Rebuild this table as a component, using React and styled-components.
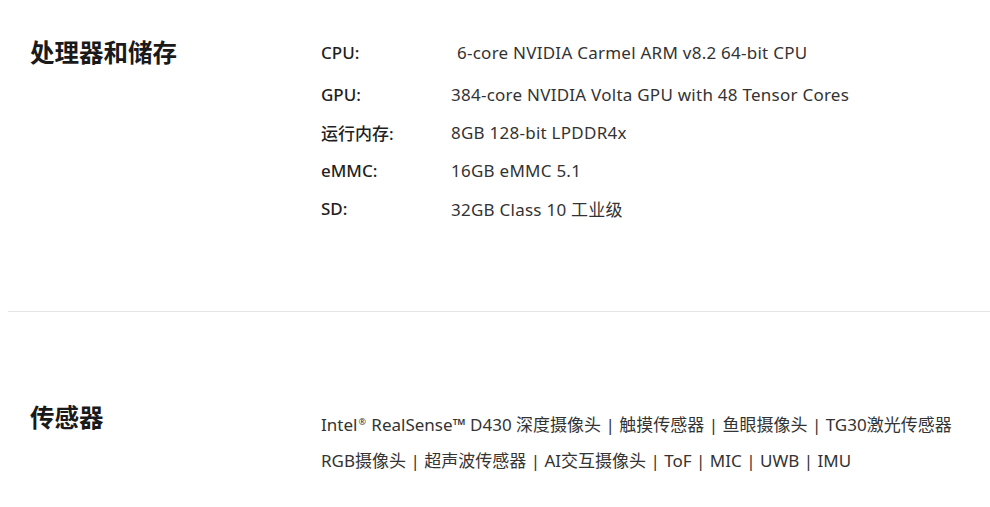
import React from 'react'
import styled, { createGlobalStyle } from 'styled-components'

const GlobalStyle = createGlobalStyle`
    body {
        margin: 0;
        background: #fff;
        font-family: "Noto Sans", "Noto Sans CJK SC", sans-serif;
    }
`
const StyledPage = styled.div`
    width: 990px;
    height: 507px;
    overflow: hidden;
    background: #fff;
`
const StyledSection = styled.section`
    display: grid;
    grid-template-columns: 291px 1fr;
    padding: ${props => props.padding};
    margin-left: 30px;
`
const StyledTitle = styled.h2`
    margin: 0;
    font-size: 24.5px;
    font-weight: 700;
    color: #1a1a1a;
    line-height: ${props => props.lineHeight};
    font-family: "Noto Sans CJK SC", sans-serif;
`
const StyledSpecList = styled.div`
    display: flex;
    flex-direction: column;
`
const StyledSpecRow = styled.div`
    display: grid;
    grid-template-columns: 130px 1fr;
    height: 38px;
    align-items: center;
    font-size: 17px;
    &:first-child {
        height: 43px;
        align-items: start;
        padding-top: 9px;
        box-sizing: border-box;
    }
`
const StyledLabel = styled.div`
    color: #1f1f1f;
    font-weight: 500;
`
const StyledValue = styled.div`
    color: #333;
    letter-spacing: 0.25px;
    padding-left: ${props => props.indent || 0}px;
`
const StyledDivider = styled.hr`
    border: 0;
    border-top: 1px solid #e4e4e4;
    margin: 0 0 0 8px;
`
const StyledSensorText = styled.div`
    font-size: 17px;
    line-height: 36px;
    color: #333;
    padding-top: 2px;
    sup {
        font-size: 9px;
        vertical-align: 6px;
        line-height: 0;
        margin: 0 1px;
    }
`

const specs = [
    { label: 'CPU:', value: '6-core NVIDIA Carmel ARM v8.2 64-bit CPU', indent: 6 },
    { label: 'GPU:', value: '384-core NVIDIA Volta GPU with 48 Tensor Cores' },
    { label: '运行内存:', value: '8GB 128-bit LPDDR4x' },
    { label: 'eMMC:', value: '16GB eMMC 5.1' },
    { label: 'SD:', value: '32GB Class 10 工业级' },
]

const App = () => {
    return (
        <StyledPage>
            <GlobalStyle />
            <StyledSection padding="32px 0 84px">
                <StyledTitle lineHeight="40px">处理器和储存</StyledTitle>
                <StyledSpecList>
                    {specs.map(spec => (
                        <StyledSpecRow key={spec.label}>
                            <StyledLabel>{spec.label}</StyledLabel>
                            <StyledValue indent={spec.indent}>{spec.value}</StyledValue>
                        </StyledSpecRow>
                    ))}
                </StyledSpecList>
            </StyledSection>
            <StyledDivider />
            <StyledSection padding="93px 0 0">
                <StyledTitle lineHeight="24px">传感器</StyledTitle>
                <StyledSensorText>
                    <div>Intel<sup>®</sup> RealSense™ D430 深度摄像头 | 触摸传感器 | 鱼眼摄像头 | TG30激光传感器</div>
                    <div>RGB摄像头 | 超声波传感器 | AI交互摄像头 | ToF | MIC | UWB | IMU</div>
                </StyledSensorText>
            </StyledSection>
        </StyledPage>
    )
}

export default App
